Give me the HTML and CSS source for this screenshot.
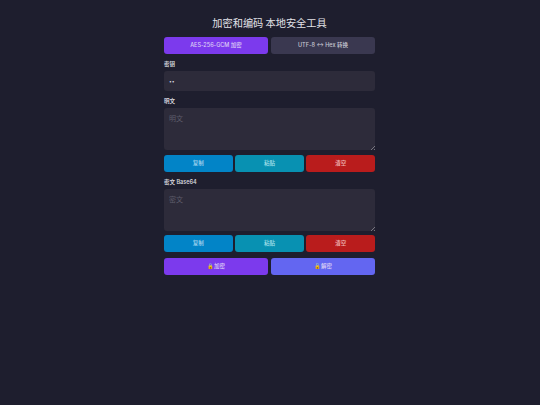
FILE: index.html
```html
<!DOCTYPE html>
<html lang="zh">
<head>
<meta charset="utf-8">
<title>加密和编码 本地安全工具</title>
<link rel="stylesheet" href="styles.css">
</head>
<body>
<main class="app">
  <h1 class="title">加密和编码 本地安全工具</h1>
  <div class="row tabs">
    <button class="btn purple">AES-256-GCM 加密</button>
    <button class="btn slate">UTF-8 ↔ Hex 转换</button>
  </div>
  <label class="label">密钥</label>
  <input class="field key" type="password" value="12">
  <label class="label">明文</label>
  <textarea class="field area" placeholder="明文"></textarea>
  <div class="row actions">
    <button class="btn blue">复制</button>
    <button class="btn cyan">粘贴</button>
    <button class="btn red">清空</button>
  </div>
  <label class="label">密文 Base64</label>
  <textarea class="field area" placeholder="密文"></textarea>
  <div class="row actions last">
    <button class="btn blue">复制</button>
    <button class="btn cyan">粘贴</button>
    <button class="btn red">清空</button>
  </div>
  <div class="row mains">
    <button class="btn purple">🔒加密</button>
    <button class="btn indigo">🔓解密</button>
  </div>
</main>
</body>
</html>
```
FILE: styles.css
```css
* { box-sizing: border-box; }
html, body { height: 100%; }
body {
  margin: 0;
  padding-right: 1px;
  background: #1e1e2e;
  color: #e8e8f0;
  font-family: "Inter", "Noto Sans CJK SC", sans-serif;
}
.app {
  width: 211px;
  margin: 0 auto;
  padding-top: 15px;
  display: flex;
  flex-direction: column;
}
.title {
  margin: 0 0 7px;
  height: 15px;
  line-height: 15px;
  font-size: 10.2px;
  font-weight: 400;
  text-align: center;
  color: #e2e2e8;
  font-family: "Noto Sans CJK SC", sans-serif;
}
.row { display: flex; gap: 3px; }
.btn {
  flex: 1 1 0;
  min-width: 0;
  height: 17px;
  padding: 0;
  border: 0;
  border-radius: 3px;
  font: 500 5.5px/17px "Inter", "Noto Sans CJK SC", sans-serif;
  color: #dcd0f6;
}
.purple { background: #7c3aed; }
.slate { background: #3a3850; color: #c8c8d4; }
.blue { background: #0284c7; color: #a8d8f0; }
.cyan { background: #0891b2; color: #a8e0ea; }
.red { background: #b91c1c; color: #f0b8b8; }
.indigo { background: #6366f1; }
.label {
  display: block;
  height: 7px;
  line-height: 7px;
  font-size: 5.5px;
  font-weight: 600;
  color: #d4d4dc;
}
.tabs { margin-bottom: 7px; }
.field {
  display: block;
  width: 100%;
  margin: 3px 0 0;
  border: 0;
  border-radius: 3px;
  background: #2d2b3a;
  color: #d8d8e0;
  font: 5px "Inter", "Noto Sans CJK SC", sans-serif;
  padding: 5px;
  outline: 0;
}
.field::placeholder { color: #5e5c6a; opacity: 1; }
.key { height: 20px; margin-bottom: 7px; }
.area { height: 42px; resize: vertical; font-size: 7px; }
.area::-webkit-resizer {
  background: linear-gradient(135deg, transparent 50%, #77757f 50%, #77757f 62%, transparent 62%, transparent 76%, #77757f 76%) no-repeat right bottom / 4px 4px;
}
.actions { margin-top: 5px; margin-bottom: 7px; gap: 2.6px; }
.last { margin-top: 4px; margin-bottom: 6px; }
```
